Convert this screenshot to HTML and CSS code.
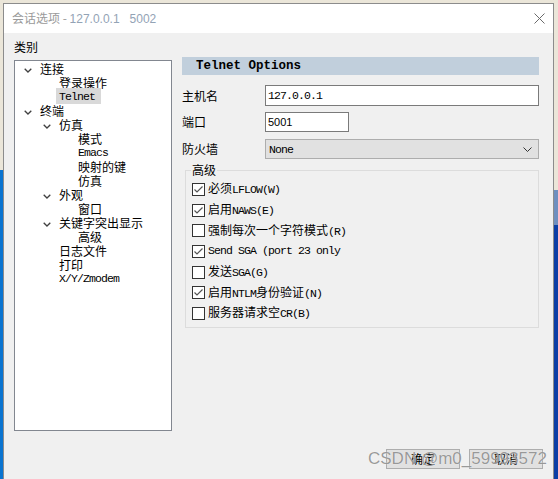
FILE: index.html
```html
<!DOCTYPE html>
<html>
<head>
<meta charset="utf-8">
<link rel="stylesheet" href="styles.css">
</head>
<body>
<div class="dialog">
  <div class="titlebar">
    <span class="title">会话选项 - <span class="tl">127.0.0.1   5002</span></span>
    <svg class="close" width="11" height="11" viewBox="0 0 11 11"><path d="M0.5 0.5L10.5 10.5M10.5 0.5L0.5 10.5" stroke="#6b6b6b" stroke-width="1" fill="none"/></svg>
  </div>
  <div class="content">
    <div class="left">
      <div class="cat">类别</div>
      <div class="tree">
        <div class="row l0"><span class="tw"><svg width="8" height="5" viewBox="0 0 8 5"><polyline points="0.7,0.7 4,4 7.3,0.7" fill="none" stroke="#404040" stroke-width="1.3"/></svg></span>连接</div>
        <div class="row l1"><span class="tw"></span>登录操作</div>
        <div class="row l1 selrow"><span class="tw"></span><span class="sel en">Telnet</span></div>
        <div class="row l0"><span class="tw"><svg width="8" height="5" viewBox="0 0 8 5"><polyline points="0.7,0.7 4,4 7.3,0.7" fill="none" stroke="#404040" stroke-width="1.3"/></svg></span>终端</div>
        <div class="row l1"><span class="tw"><svg width="8" height="5" viewBox="0 0 8 5"><polyline points="0.7,0.7 4,4 7.3,0.7" fill="none" stroke="#404040" stroke-width="1.3"/></svg></span>仿真</div>
        <div class="row l2"><span class="tw"></span>模式</div>
        <div class="row l2"><span class="tw"></span><span class="en">Emacs</span></div>
        <div class="row l2"><span class="tw"></span>映射的键</div>
        <div class="row l2"><span class="tw"></span>仿真</div>
        <div class="row l1"><span class="tw"><svg width="8" height="5" viewBox="0 0 8 5"><polyline points="0.7,0.7 4,4 7.3,0.7" fill="none" stroke="#404040" stroke-width="1.3"/></svg></span>外观</div>
        <div class="row l2"><span class="tw"></span>窗口</div>
        <div class="row l1"><span class="tw"><svg width="8" height="5" viewBox="0 0 8 5"><polyline points="0.7,0.7 4,4 7.3,0.7" fill="none" stroke="#404040" stroke-width="1.3"/></svg></span>关键字突出显示</div>
        <div class="row l2"><span class="tw"></span>高级</div>
        <div class="row l1"><span class="tw"></span>日志文件</div>
        <div class="row l1"><span class="tw"></span>打印</div>
        <div class="row l1"><span class="tw"></span><span class="en">X/Y/Zmodem</span></div>
      </div>
    </div>
    <div class="right">
      <div class="hdr">Telnet Options</div>
      <div class="field f1">
        <span class="lbl">主机名</span>
        <div class="input wide"><span class="en">127.0.0.1</span></div>
      </div>
      <div class="field f2">
        <span class="lbl">端口</span>
        <div class="input narrow"><span class="num">5001</span></div>
      </div>
      <div class="field f3">
        <span class="lbl">防火墙</span>
        <div class="select"><span class="en">None</span>
          <svg class="dd" width="9" height="5" viewBox="0 0 9 5"><polyline points="0.5,0.5 4.5,4.5 8.5,0.5" fill="none" stroke="#333" stroke-width="1"/></svg>
        </div>
      </div>
      <fieldset class="group">
        <legend>高级</legend>
        <div class="cb"><span class="box on"><svg width="11" height="11" viewBox="0 0 11 11"><polyline points="1.5,5.5 4,8 9.5,2.5" fill="none" stroke="#555" stroke-width="1.2"/></svg></span><span>必须<span class="en">LFLOW(W)</span></span></div>
        <div class="cb"><span class="box on"><svg width="11" height="11" viewBox="0 0 11 11"><polyline points="1.5,5.5 4,8 9.5,2.5" fill="none" stroke="#555" stroke-width="1.2"/></svg></span><span>启用<span class="en">NAWS(E)</span></span></div>
        <div class="cb"><span class="box"></span><span>强制每次一个字符模式<span class="en">(R)</span></span></div>
        <div class="cb"><span class="box on"><svg width="11" height="11" viewBox="0 0 11 11"><polyline points="1.5,5.5 4,8 9.5,2.5" fill="none" stroke="#555" stroke-width="1.2"/></svg></span><span class="en">Send SGA (port 23 only</span></div>
        <div class="cb"><span class="box"></span><span>发送<span class="en">SGA(G)</span></span></div>
        <div class="cb"><span class="box on"><svg width="11" height="11" viewBox="0 0 11 11"><polyline points="1.5,5.5 4,8 9.5,2.5" fill="none" stroke="#555" stroke-width="1.2"/></svg></span><span>启用<span class="en">NTLM</span>身份验证<span class="en">(N)</span></span></div>
        <div class="cb"><span class="box"></span><span>服务器请求空<span class="en">CR(B)</span></span></div>
      </fieldset>
    </div>
  </div>
  <div class="footer">
    <div class="btn">确定</div>
    <div class="btn">取消</div>
  </div>
  <div class="wm">CSDN @m0_59993572</div>
</div>
</body>
</html>
```
FILE: styles.css
```css
html, body {
  margin: 0;
  padding: 0;
}
body {
  width: 558px;
  height: 479px;
  overflow: hidden;
  background:
    linear-gradient(#0a74d0, #0a74d0) no-repeat 0 170px / 3px 309px,
    linear-gradient(#6f8fbf, #6f8fbf) no-repeat right 0 top 190px / 4px 35px,
    linear-gradient(#0c3ea5, #0c3ea5) no-repeat right 0 top 225px / 4px 254px,
    #ebe6d9;
  font-family: "Noto Sans CJK SC", sans-serif;
  font-size: 12px;
  color: #000;
}
.dialog {
  position: relative;
  margin: 3px 0 0 3px;
  width: 549px;
  height: 475px;
  border: 1px solid #8c8c8c;
  border-bottom: none;
  background: #f0f0f0;
}
.titlebar {
  height: 29px;
  background: #fff;
  display: flex;
  align-items: center;
  padding-left: 8px;
  color: #9a9a9a;
}
.title {
  font-size: 12px;
  line-height: 16px;
}
.tl {
  font-family: "Liberation Sans", sans-serif;
  white-space: pre;
  color: #93a3b5;
}
.close {
  margin-left: auto;
  margin-right: 8px;
}
.content {
  display: flex;
  align-items: flex-start;
  gap: 10px;
  padding-left: 10px;
}
.left {
  width: 158px;
}
.cat {
  padding-top: 6px;
  line-height: 16px;
  margin-bottom: 5px;
}
.tree {
  box-sizing: border-box;
  height: 371px;
  border: 1px solid #828790;
  background: #fff;
  padding-top: 1px;
}
.row {
  height: 14px;
  display: flex;
  align-items: center;
  line-height: 14px;
  white-space: nowrap;
}
.l0 { padding-left: 9px; }
.l1 { padding-left: 28px; }
.l2 { padding-left: 47px; }
.tw {
  width: 16px;
  flex: none;
  display: flex;
  align-items: center;
  padding-top: 2px;
}
.en {
  font-family: "Liberation Mono", monospace;
  font-size: 11.5px;
  letter-spacing: -0.9px;
}
.sel {
  background: #d9d9d9;
  height: 16px;
  line-height: 17px;
  padding: 0 6px 0 3px;
  margin-left: -3px;
  margin-top: -3px;
}
.right {
  width: 357px;
  padding-top: 24px;
}
.hdr {
  height: 18px;
  line-height: 18px;
  background: #c1cfdc;
  padding-left: 14px;
  font-family: "Liberation Mono", monospace;
  font-weight: bold;
  font-size: 12.5px;
}
.field {
  display: flex;
  align-items: center;
}
.lbl {
  width: 83px;
  flex: none;
  line-height: 16px;
}
.f1 { margin-top: 10px; }
.f2 { margin-top: 6px; }
.f3 { margin-top: 7px; }
.input {
  box-sizing: border-box;
  background: #fff;
  border: 1px solid #7a7a7a;
  padding-left: 2px;
  display: flex;
  align-items: center;
}
.wide { width: 274px; height: 21px; }
.narrow { width: 84px; height: 20px; }
.num {
  font-family: "Liberation Sans", sans-serif;
  font-size: 11px;
}
.select {
  box-sizing: border-box;
  width: 274px;
  height: 20px;
  background: #e1e1e1;
  border: 1px solid #adadad;
  padding-left: 3px;
  display: flex;
  align-items: center;
}
.dd {
  margin-left: auto;
  margin-right: 6px;
}
.group {
  margin: 4px 0 0 3px;
  width: 354px;
  box-sizing: border-box;
  border: 1px solid #dcdcdc;
  padding: 2px 0 3px 5px;
  min-width: 0;
}
.group legend {
  padding: 0 1px;
  line-height: 14px;
  font-size: 12px;
}
.cb {
  height: 20.7px;
  display: flex;
  align-items: center;
  white-space: nowrap;
  line-height: 16px;
}
.box {
  box-sizing: border-box;
  width: 13px;
  height: 13px;
  border: 1px solid #333;
  background: #fff;
  margin-left: 1px;
  margin-right: 3px;
  flex: none;
  display: flex;
}
.footer {
  display: flex;
  justify-content: flex-end;
  gap: 9px;
  padding-right: 10px;
  margin-top: 18px;
}
.btn {
  box-sizing: border-box;
  width: 74px;
  height: 20px;
  background: #e1e1e1;
  border: 1px solid #adadad;
  display: flex;
  align-items: center;
  justify-content: center;
  line-height: 16px;
}
.wm {
  position: absolute;
  left: 364px;
  top: 445px;
  font-family: "Liberation Sans", sans-serif;
  font-size: 17px;
  color: rgba(120, 120, 120, 0.75);
  text-shadow: 0 0 1px #fff;
  white-space: nowrap;
}
```
